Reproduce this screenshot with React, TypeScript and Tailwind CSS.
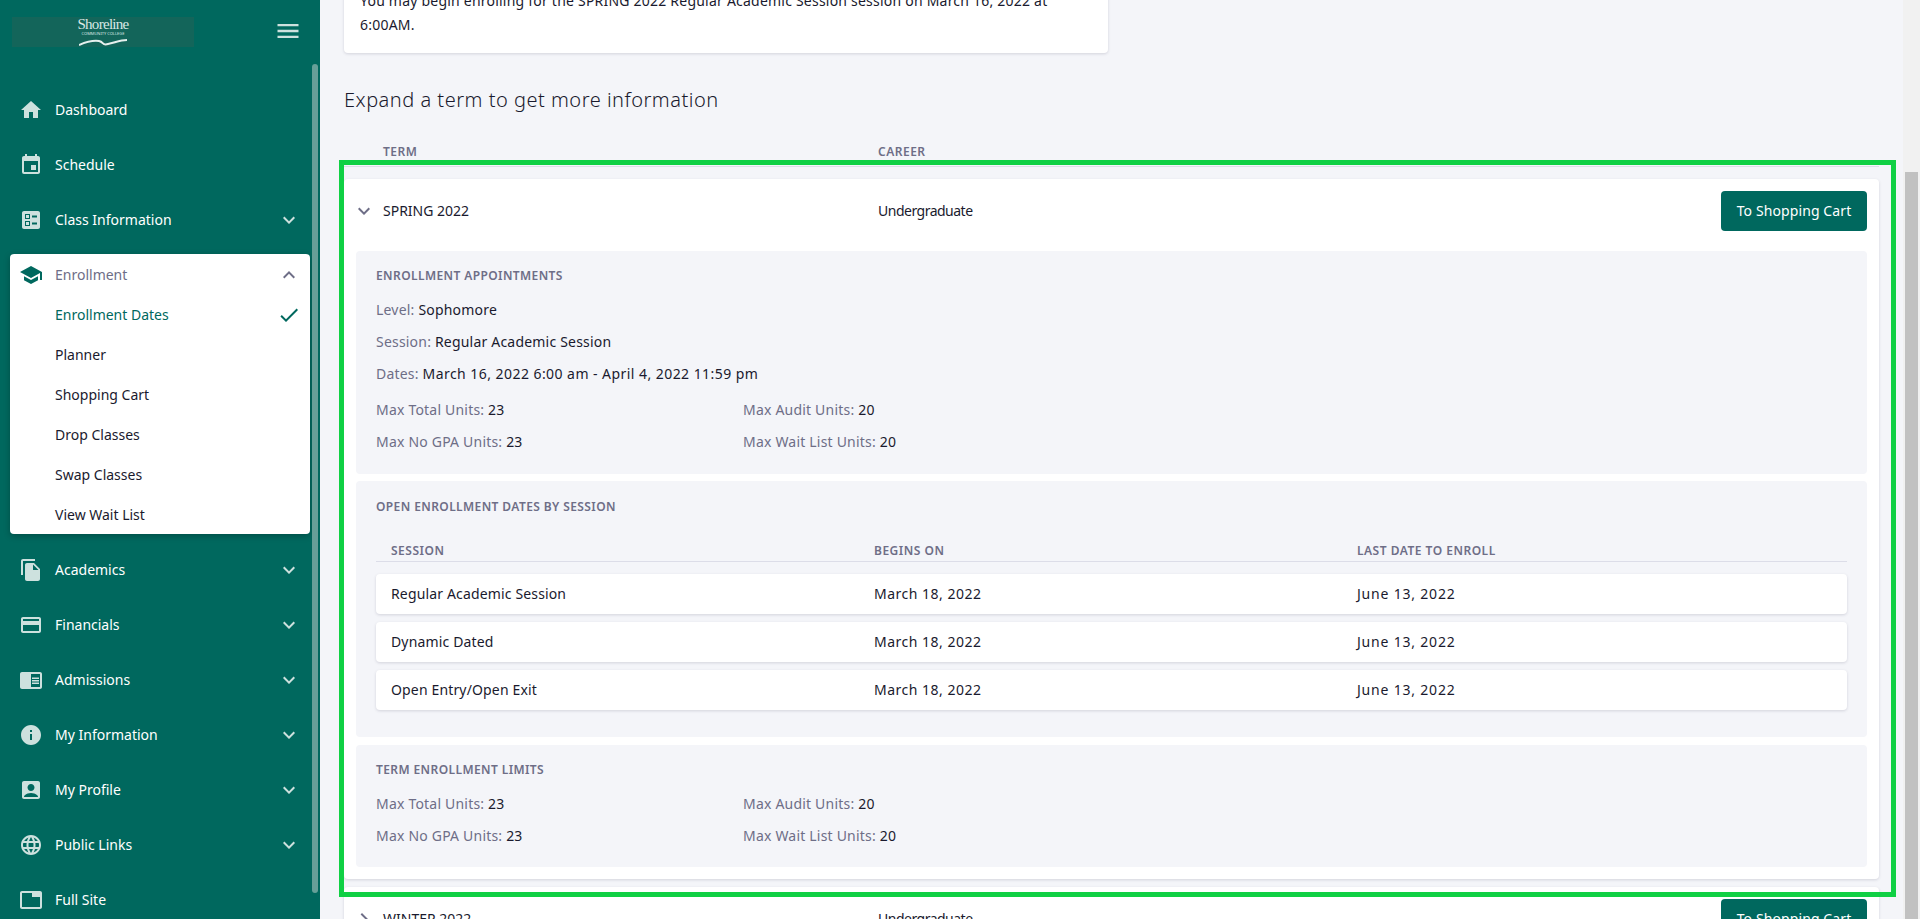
import React from 'react';
import {
  MdAccountBox,
  MdBallot,
  MdChromeReaderMode,
  MdCreditCard,
  MdEvent,
  MdExpandLess,
  MdExpandMore,
  MdFileCopy,
  MdHome,
  MdInfo,
  MdLanguage,
  MdMenu,
  MdCheck,
  MdSchool,
  MdTab,
  MdChevronRight,
} from 'react-icons/md';

const SubItems = ['Enrollment Dates', 'Planner', 'Shopping Cart', 'Drop Classes', 'Swap Classes', 'View Wait List'];

const NavRow = ({ icon: Icon, label, more = false }: { icon: any; label: string; more?: boolean }) => (
  <div className="flex h-[55px] items-center pl-[19px] pr-[19px] text-white">
    <Icon size={24} className="shrink-0 text-[#cde1de]" />
    <span className="ml-3 flex-1 text-sm">{label}</span>
    {more && <MdExpandMore size={24} className="text-[#cde1de]" />}
  </div>
);

const Units = ({ total, audit, noGpa, wait }: { total: string; audit: string; noGpa: string; wait: string }) => (
  <div className="flex flex-col gap-[12px]">
    <div className="flex h-5 items-center">
      <Field className="w-[367px]" label="Max Total Units" value={total} />
      <Field label="Max Audit Units" value={audit} />
    </div>
    <div className="flex h-5 items-center">
      <Field className="w-[367px]" label="Max No GPA Units" value={noGpa} />
      <Field label="Max Wait List Units" value={wait} />
    </div>
  </div>
);

const Field = ({ label, value, className = '' }: { label: string; value: string; className?: string }) => (
  <div className={`text-sm tracking-[0.2px] text-[#6e6e87] ${className}`}>
    {label}: <span className="text-[#1a1a2e]">{value}</span>
  </div>
);

const SectionTitle = ({ children }: { children: React.ReactNode }) => (
  <div className="text-xs font-semibold uppercase tracking-[0.4px] text-[#6e6e87]">{children}</div>
);

const SessionRow = ({ name }: { name: string }) => (
  <div className="flex h-10 items-center rounded bg-white pl-[15px] text-sm text-[#1a1a2e] shadow-[0_1px_3px_rgba(60,60,90,0.18)]">
    <div className="w-[483px] tracking-[0.15px]">{name}</div>
    <div className="w-[483px] tracking-[0.5px]">March 18, 2022</div>
    <div className="tracking-[0.8px]">June 13, 2022</div>
  </div>
);

const ShoppingButton = () => (
  <button className="h-10 w-[146px] rounded bg-[#00685e] text-sm tracking-[0.1px] text-white">To Shopping Cart</button>
);

const TermRow = ({ term, open }: { term: string; open: boolean }) => (
  <div className="flex h-10 items-center text-sm">
    {open ? (
      <MdExpandMore size={24} className="ml-[-4px] text-[#6e6e87]" />
    ) : (
      <MdChevronRight size={24} className="ml-[-4px] text-[#6e6e87]" />
    )}
    <div className="ml-[7px] w-[495px]">{term}</div>
    <div className="flex-1 tracking-[-0.5px]">Undergraduate</div>
    <ShoppingButton />
  </div>
);

export default function App() {
  return (
    <div className="flex h-[919px] w-[1920px] overflow-hidden bg-[#f4f5f9] font-['Noto_Sans',sans-serif] text-[#1a1a2e]">
      <aside className="relative flex w-80 shrink-0 flex-col overflow-hidden bg-[#00685e]">
        <div className="flex h-[82px] shrink-0 items-start pl-3 pr-[18px] pt-[17px]">
          <div className="flex h-[30px] w-[182px] flex-col items-center bg-[#13655a] leading-none text-[#d9e8e5]">
            <span className="font-['Liberation_Serif',serif] text-[15px] leading-[14px] tracking-[-0.7px]">Shoreline</span>
            <span className="text-[4px] leading-[6px]">COMMUNITY COLLEGE</span>
            <svg width="48" height="10" viewBox="0 0 48 10">
              <path d="M0 8c7-3 13-5 20-4 5 1 3 5 9 3 6-1 12-4 19-4" fill="none" stroke="#e6f0ee" strokeWidth="2" />
            </svg>
          </div>
          <MdMenu size={28} className="ml-auto text-[#cde1de]" />
        </div>
        <nav className="flex flex-col">
          <NavRow icon={MdHome} label="Dashboard" />
          <NavRow icon={MdEvent} label="Schedule" />
          <NavRow icon={MdBallot} label="Class Information" more />
          <div className="mx-[10px] mb-[8px] mt-[7px] h-[280px] w-[300px] rounded bg-white pb-px shadow-[0_2px_6px_rgba(0,0,0,0.25)]">
            <div className="flex h-[41px] items-center pl-[9px] pr-[9px]">
              <MdSchool size={24} className="text-[#00685e]" />
              <span className="ml-3 flex-1 text-sm text-[#6e6e87]">Enrollment</span>
              <MdExpandLess size={24} className="text-[#6e6e87]" />
            </div>
            {SubItems.map((item, i) => (
              <div key={item} className="flex h-10 items-center pl-[45px] pr-[9px] text-sm">
                <span className={`flex-1 ${i === 0 ? 'text-[#00685e]' : ''}`}>{item}</span>
                {i === 0 && <MdCheck size={24} className="text-[#00685e]" />}
              </div>
            ))}
          </div>
          <NavRow icon={MdFileCopy} label="Academics" more />
          <NavRow icon={MdCreditCard} label="Financials" more />
          <NavRow icon={MdChromeReaderMode} label="Admissions" more />
          <NavRow icon={MdInfo} label="My Information" more />
          <NavRow icon={MdAccountBox} label="My Profile" more />
          <NavRow icon={MdLanguage} label="Public Links" more />
          <NavRow icon={MdTab} label="Full Site" />
        </nav>
        <div className="absolute left-[312px] top-[64px] h-[829px] w-[6px] rounded-full bg-[#669f98]" />
      </aside>

      <main className="relative flex-1 overflow-hidden px-6">
        <div className="-mt-[12px] h-[65px] w-[764px] rounded bg-white px-4 pt-[1px] text-sm leading-[24px] tracking-[0.22px] shadow-[0_1px_3px_rgba(60,60,90,0.18)]">
          You may begin enrolling for the SPRING 2022 Regular Academic Session session on March 16, 2022 at
          <br />
          6:00AM.
        </div>
        <h2 className="mt-[32px] text-xl font-light leading-[30px] tracking-[0.5px]">Expand a term to get more information</h2>
        <div className="mt-[29px] flex h-[23px] items-start border-b border-[#dcdde8] pl-[39px] text-xs font-semibold uppercase tracking-[0.5px] text-[#6e6e87]">
          <div className="w-[495px]">Term</div>
          <div>Career</div>
        </div>

        <section className="mt-3 h-[700px] rounded bg-white px-3 pt-3 shadow-[0_1px_3px_rgba(60,60,90,0.18)]">
          <TermRow term="SPRING 2022" open />
          <div className="mt-5 flex flex-col gap-[7px]">
            <div className="h-[223px] rounded bg-[#f4f5f9] px-5 pt-[17px]">
              <SectionTitle>Enrollment Appointments</SectionTitle>
              <div className="mt-[16px] flex flex-col gap-[12px] text-sm tracking-[0.2px] text-[#6e6e87]">
                <div className="h-5">Level: <span className="text-[#1a1a2e]">Sophomore</span></div>
                <div className="h-5">Session: <span className="text-[#1a1a2e]">Regular Academic Session</span></div>
                <div className="h-5">Dates: <span className="tracking-[0.45px] text-[#1a1a2e]">March 16, 2022 6:00 am - April 4, 2022 11:59 pm</span></div>
              </div>
              <div className="mt-[16px]">
                <Units total="23" audit="20" noGpa="23" wait="20" />
              </div>
            </div>
            <div className="h-[256px] rounded bg-[#f4f5f9] px-5 pt-[18px]">
              <SectionTitle>Open Enrollment Dates By Session</SectionTitle>
              <div className="mt-[26px] flex h-[21px] items-start border-b border-[#dcdde8] pl-[15px] pt-[2px] text-xs font-semibold uppercase tracking-[0.5px] text-[#6e6e87]">
                <div className="w-[483px]">Session</div>
                <div className="w-[483px]">Begins On</div>
                <div>Last Date To Enroll</div>
              </div>
              <div className="mt-3 flex flex-col gap-2">
                <SessionRow name="Regular Academic Session" />
                <SessionRow name="Dynamic Dated" />
                <SessionRow name="Open Entry/Open Exit" />
              </div>
            </div>
            <div className="mt-px h-[122px] rounded bg-[#f4f5f9] px-5 pt-[17px]">
              <SectionTitle>Term Enrollment Limits</SectionTitle>
              <div className="mt-[16px]">
                <Units total="23" audit="20" noGpa="23" wait="20" />
              </div>
            </div>
          </div>
        </section>

        <section className="mt-2 rounded bg-white p-3 shadow-[0_1px_3px_rgba(60,60,90,0.18)]">
          <TermRow term="WINTER 2022" open={false} />
        </section>

        {/* highlight drawn over the screenshot */}
        <div className="pointer-events-none absolute left-[19px] top-[160px] h-[737px] w-[1557px] border-[5px] border-[#10d044]" />
      </main>

      <div className="relative w-[17px] shrink-0 bg-[#f1f1f1]">
        <div className="absolute bottom-0 left-[2px] top-[172px] w-[13px] bg-[#c1c1c1]" />
      </div>
    </div>
  );
}
